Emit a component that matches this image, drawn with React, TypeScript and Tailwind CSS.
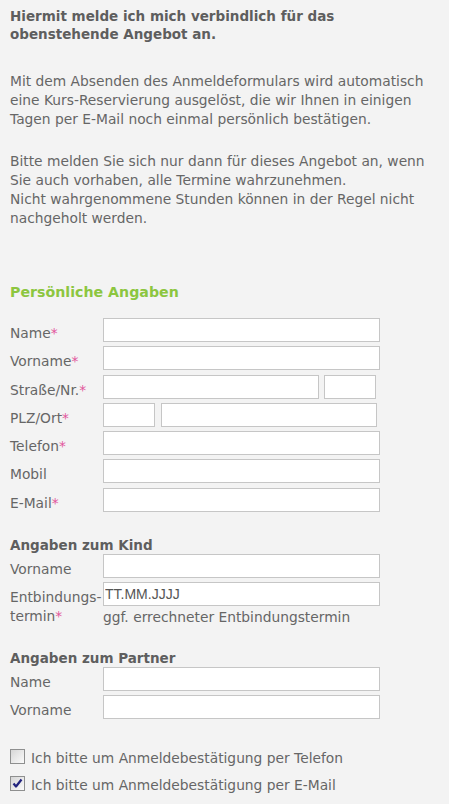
import React from 'react';

const body = "font-['DejaVu_Sans',Verdana,sans-serif] text-[13.8px] leading-[19px] text-[#666]";

function Star() {
  return <span className="text-[#e2559c]">*</span>;
}

function Field({ className = '', value }: { className?: string; value?: string }) {
  return (
    <input
      readOnly
      value={value ?? ''}
      className={`h-[24px] border border-[#c6c6c6] bg-white pl-[1px] font-['Liberation_Sans',Arial,sans-serif] text-[14px] text-[#555] outline-none ${className}`}
    />
  );
}

function Row({ label, required, children }: { label: string; required?: boolean; children: React.ReactNode }) {
  return (
    <div className="flex items-start">
      <div className="w-[93px] shrink-0 whitespace-nowrap pt-[6px]">
        {label}
        {required && <Star />}
      </div>
      <div className="flex items-start">{children}</div>
    </div>
  );
}

function Check({ checked, label }: { checked?: boolean; label: string }) {
  return (
    <div className="flex items-start">
      <span className="relative mt-[-0.5px] flex h-[15px] w-[15px] shrink-0 items-center justify-center border border-[#8e8f8f] bg-gradient-to-br from-[#d6d6d6] to-[#fbfbfb]">
        {checked && (
          <svg width="11" height="11" viewBox="0 0 11 11">
            <path d="M1.5 5.5 L4 8.5 L9.5 1.5" fill="none" stroke="#22237e" strokeWidth="2.2" strokeLinejoin="round" />
          </svg>
        )}
      </span>
      <span className="ml-[6px]">{label}</span>
    </div>
  );
}

export default function App() {
  return (
    <div className={`min-h-screen w-[449px] bg-[#f3f3f3] pl-[10px] pt-[7px] ${body}`}>
      <h1 className="text-[13.5px] font-bold leading-[18px] text-[#5e5e5e]">
        Hiermit melde ich mich verbindlich für das
        <br />
        obenstehende Angebot an.
      </h1>

      <p className="mt-[29px]">
        Mit dem Absenden des Anmeldeformulars wird automatisch
        <br />
        eine Kurs-Reservierung ausgelöst, die wir Ihnen in einigen
        <br />
        Tagen per E-Mail noch einmal persönlich bestätigen.
      </p>

      <p className="mt-[23px]">
        Bitte melden Sie sich nur dann für dieses Angebot an, wenn
        <br />
        Sie auch vorhaben, alle Termine wahrzunehmen.
        <br />
        Nicht wahrgenommene Stunden können in der Regel nicht
        <br />
        nachgeholt werden.
      </p>

      <h2 className="mt-[55px] text-[14.2px] font-bold leading-[19px] text-[#8cc63f]">Persönliche Angaben</h2>

      {/* Persönliche Angaben */}
      <div className="mt-[16px] flex flex-col gap-[3.3px]">
        <Row label="Name" required>
          <Field className="w-[277px]" />
        </Row>
        <Row label="Vorname" required>
          <Field className="w-[277px]" />
        </Row>
        <Row label="Straße/Nr." required>
          <Field className="w-[216px]" />
          <Field className="ml-[5px] w-[52px]" />
        </Row>
        <Row label="PLZ/Ort" required>
          <Field className="w-[52px]" />
          <Field className="ml-[6px] w-[216px]" />
        </Row>
        <Row label="Telefon" required>
          <Field className="w-[277px]" />
        </Row>
        <Row label="Mobil">
          <Field className="w-[277px]" />
        </Row>
        <Row label="E-Mail" required>
          <Field className="w-[277px]" />
        </Row>
      </div>

      {/* Kind */}
      <h3 className="mt-[23px] text-[13.5px] font-bold leading-[18px] text-[#5e5e5e]">Angaben zum Kind</h3>
      <div className="flex flex-col gap-[3px]">
        <Row label="Vorname">
          <Field className="w-[277px]" />
        </Row>
        <div className="flex items-start">
          <div className="w-[93px] shrink-0 whitespace-nowrap pt-[6px]">
            Entbindungs-
            <br />
            termin
            <Star />
          </div>
          <div className="flex flex-col">
            <Field className="w-[277px]" value="TT.MM.JJJJ" />
            <span className="mt-[2px]">ggf. errechneter Entbindungstermin</span>
          </div>
        </div>
      </div>

      {/* Partner */}
      <h3 className="mt-[22px] text-[13.5px] font-bold leading-[18px] text-[#5e5e5e]">Angaben zum Partner</h3>
      <div className="flex flex-col gap-[3.3px]">
        <Row label="Name">
          <Field className="w-[277px]" />
        </Row>
        <Row label="Vorname">
          <Field className="w-[277px]" />
        </Row>
      </div>

      <div className="mt-[29px] flex flex-col gap-[8px] pb-[10px]">
        <Check label="Ich bitte um Anmeldebestätigung per Telefon" />
        <Check checked label="Ich bitte um Anmeldebestätigung per E-Mail" />
      </div>
    </div>
  );
}
